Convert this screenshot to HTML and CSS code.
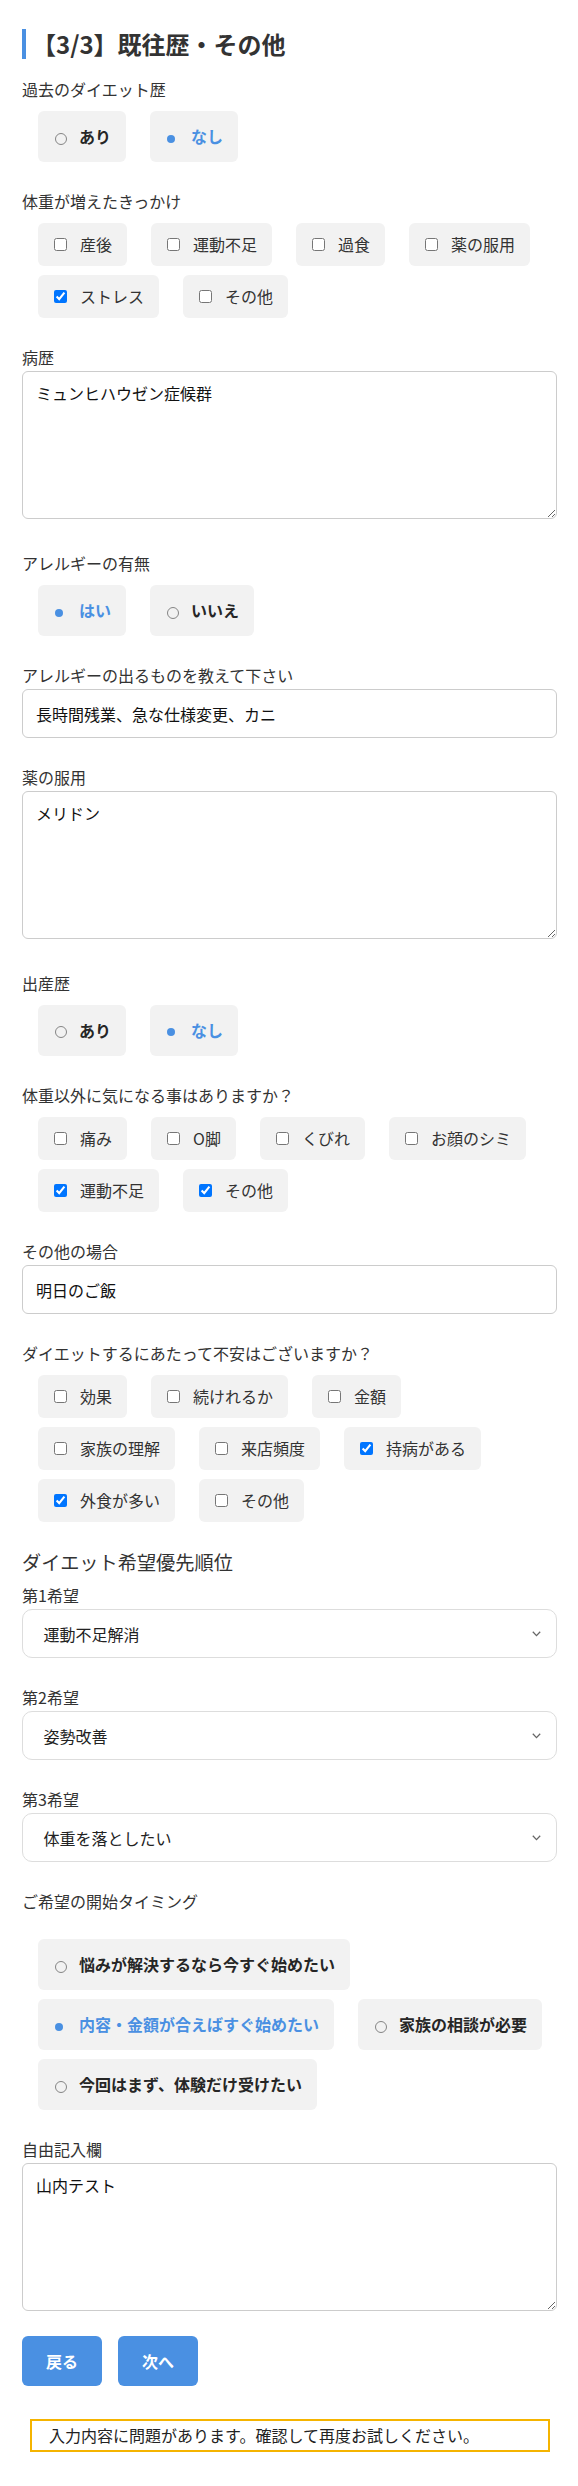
FILE: index.html
```html
<!DOCTYPE html>
<html lang="ja">
<head>
<meta charset="utf-8">
<title>【3/3】既往歴・その他</title>
<link rel="stylesheet" href="styles.css">
</head>
<body>
<div class="page">
  <h2 class="title">【3/3】既往歴・その他</h2>

  <div class="field">
    <div class="label">過去のダイエット歴</div>
    <div class="opts">
      <div class="opt radio"><span class="ind off"></span><span>あり</span></div>
      <div class="opt radio sel-on"><span class="ind on"></span><span>なし</span></div>
    </div>
  </div>

  <div class="field">
    <div class="label">体重が増えたきっかけ</div>
    <div class="opts">
      <label class="opt cb"><input type="checkbox"><span>産後</span></label>
      <label class="opt cb"><input type="checkbox"><span>運動不足</span></label>
      <label class="opt cb"><input type="checkbox"><span>過食</span></label>
      <label class="opt cb"><input type="checkbox"><span>薬の服用</span></label>
      <label class="opt cb"><input type="checkbox" checked><span>ストレス</span></label>
      <label class="opt cb"><input type="checkbox"><span>その他</span></label>
    </div>
  </div>

  <div class="field field-ta">
    <div class="label">病歴</div>
    <textarea class="ta">ミュンヒハウゼン症候群</textarea>
  </div>

  <div class="field">
    <div class="label">アレルギーの有無</div>
    <div class="opts">
      <div class="opt radio sel-on"><span class="ind on"></span><span>はい</span></div>
      <div class="opt radio"><span class="ind off"></span><span>いいえ</span></div>
    </div>
  </div>

  <div class="field">
    <div class="label">アレルギーの出るものを教えて下さい</div>
    <input class="inp" type="text" value="長時間残業、急な仕様変更、カニ">
  </div>

  <div class="field field-ta">
    <div class="label">薬の服用</div>
    <textarea class="ta">メリドン</textarea>
  </div>

  <div class="field">
    <div class="label">出産歴</div>
    <div class="opts">
      <div class="opt radio"><span class="ind off"></span><span>あり</span></div>
      <div class="opt radio sel-on"><span class="ind on"></span><span>なし</span></div>
    </div>
  </div>

  <div class="field">
    <div class="label">体重以外に気になる事はありますか？</div>
    <div class="opts">
      <label class="opt cb"><input type="checkbox"><span>痛み</span></label>
      <label class="opt cb"><input type="checkbox"><span>O脚</span></label>
      <label class="opt cb"><input type="checkbox"><span>くびれ</span></label>
      <label class="opt cb"><input type="checkbox"><span>お顔のシミ</span></label>
      <label class="opt cb"><input type="checkbox" checked><span>運動不足</span></label>
      <label class="opt cb"><input type="checkbox" checked><span>その他</span></label>
    </div>
  </div>

  <div class="field">
    <div class="label">その他の場合</div>
    <input class="inp" type="text" value="明日のご飯">
  </div>

  <div class="field">
    <div class="label">ダイエットするにあたって不安はございますか？</div>
    <div class="opts">
      <label class="opt cb"><input type="checkbox"><span>効果</span></label>
      <label class="opt cb"><input type="checkbox"><span>続けれるか</span></label>
      <label class="opt cb"><input type="checkbox"><span>金額</span></label>
      <label class="opt cb"><input type="checkbox"><span>家族の理解</span></label>
      <label class="opt cb"><input type="checkbox"><span>来店頻度</span></label>
      <label class="opt cb"><input type="checkbox" checked><span>持病がある</span></label>
      <label class="opt cb"><input type="checkbox" checked><span>外食が多い</span></label>
      <label class="opt cb"><input type="checkbox"><span>その他</span></label>
    </div>
  </div>

  <h3 class="subtitle">ダイエット希望優先順位</h3>

  <div class="field">
    <div class="label">第1希望</div>
    <div class="select"><span>運動不足解消</span><svg class="chev" width="9" height="6" viewBox="0 0 9 6"><polyline points="0.8,0.8 4.5,4.6 8.2,0.8" fill="none" stroke="#666" stroke-width="1.3"/></svg></div>
  </div>

  <div class="field">
    <div class="label">第2希望</div>
    <div class="select"><span>姿勢改善</span><svg class="chev" width="9" height="6" viewBox="0 0 9 6"><polyline points="0.8,0.8 4.5,4.6 8.2,0.8" fill="none" stroke="#666" stroke-width="1.3"/></svg></div>
  </div>

  <div class="field">
    <div class="label">第3希望</div>
    <div class="select"><span>体重を落としたい</span><svg class="chev" width="9" height="6" viewBox="0 0 9 6"><polyline points="0.8,0.8 4.5,4.6 8.2,0.8" fill="none" stroke="#666" stroke-width="1.3"/></svg></div>
  </div>

  <div class="field">
    <div class="label">ご希望の開始タイミング</div>
    <div class="opts opts-spaced">
      <div class="opt radio"><span class="ind off"></span><span>悩みが解決するなら今すぐ始めたい</span></div>
      <div class="opt radio sel-on"><span class="ind on"></span><span>内容・金額が合えばすぐ始めたい</span></div>
      <div class="opt radio"><span class="ind off"></span><span>家族の相談が必要</span></div>
      <div class="opt radio"><span class="ind off"></span><span>今回はまず、体験だけ受けたい</span></div>
    </div>
  </div>

  <div class="field field-last">
    <div class="label">自由記入欄</div>
    <textarea class="ta">山内テスト</textarea>
  </div>

  <div class="actions">
    <button class="btn" type="button">戻る</button>
    <button class="btn" type="button">次へ</button>
  </div>

  <div class="alert">入力内容に問題があります。確認して再度お試しください。</div>
</div>
</body>
</html>
```

FILE: styles.css
```css
html, body {
  margin: 0;
  padding: 0;
  background: #ffffff;
}

body {
  font-family: "Noto Sans CJK JP", "Noto Sans", "Liberation Sans", sans-serif;
  color: #333333;
  font-size: 16px;
}

.page {
  padding: 0 21px 33px 22px;
}

.title {
  margin: 29px 0 18px;
  border-left: 4px solid #4a90e2;
  padding-left: 6px;
  font-size: 24px;
  line-height: 30px;
  font-weight: 700;
  color: #333333;
}

.field {
  margin-bottom: 26.5px;
}

.field-ta {
  margin-bottom: 31.5px;
}

.field-last {
  margin-bottom: 25px;
}

.label {
  font-size: 16px;
  line-height: 24px;
  margin-bottom: 2.5px;
  color: #333333;
}

.opts {
  display: flex;
  flex-wrap: wrap;
  gap: 8.6px 24px;
  padding: 7.5px 0 0 16px;
}

.opts-spaced {
  padding-top: 23.5px;
}

.opt {
  display: flex;
  align-items: center;
  background: #f2f2f2;
  border-radius: 6px;
  font-size: 16px;
  white-space: nowrap;
}

.radio {
  padding: 14px 15px 14px 17px;
  line-height: 23.4px;
  gap: 12px;
  font-weight: 700;
  color: #262626;
}

.radio.sel-on {
  color: #4a90e2;
}

.ind {
  flex: none;
  width: 12px;
  height: 12px;
  box-sizing: border-box;
  position: relative;
  top: 2px;
}

.ind.off {
  border: 1px solid #858585;
  border-radius: 50%;
}

.ind.on::before {
  content: "";
  display: block;
  width: 8px;
  height: 8px;
  margin-top: 2px;
  border-radius: 50%;
  background: #4a90e2;
}

.cb {
  padding: 12px 15px 12px 16px;
  line-height: 19.4px;
  gap: 13px;
  color: #333333;
}

.cb input {
  margin: 0;
  width: 13px;
  height: 13px;
  flex: none;
}

.ta {
  display: block;
  width: 100%;
  box-sizing: border-box;
  height: 148px;
  margin: 0;
  border: 1px solid #cccccc;
  border-radius: 6px;
  padding: 10px 13px;
  font-family: "Noto Sans CJK JP", "Noto Sans", sans-serif;
  font-size: 16px;
  line-height: 23px;
  color: #111111;
  background: #ffffff;
}

.inp {
  display: block;
  width: 100%;
  box-sizing: border-box;
  height: 49px;
  margin: 0;
  border: 1px solid #cccccc;
  border-radius: 6px;
  padding: 0 13px;
  font-family: "Noto Sans CJK JP", "Noto Sans", sans-serif;
  font-size: 16px;
  color: #111111;
  background: #ffffff;
}

.select {
  display: flex;
  align-items: center;
  justify-content: space-between;
  height: 49px;
  box-sizing: border-box;
  border: 1px solid #dddddd;
  border-radius: 10px;
  padding: 0 15px 0 20.5px;
  font-size: 16px;
  color: #222222;
  background: #ffffff;
}

.chev {
  flex: none;
  display: block;
}

.subtitle {
  margin: 0 0 6.5px;
  font-size: 19.2px;
  line-height: 28px;
  font-weight: 400;
  color: #333333;
}

.actions {
  display: flex;
  gap: 16px;
}

.btn {
  background: #4a90e2;
  color: #ffffff;
  border: none;
  border-radius: 6px;
  padding: 13px 24px;
  font-family: "Noto Sans CJK JP", "Noto Sans", sans-serif;
  font-size: 16px;
  line-height: 24px;
  font-weight: 700;
}

.alert {
  margin: 32.6px 7px 0 8px;
  border: 2px solid #f5b400;
  padding: 3px 17px;
  font-size: 16px;
  line-height: 23.4px;
  color: #222222;
}
```
